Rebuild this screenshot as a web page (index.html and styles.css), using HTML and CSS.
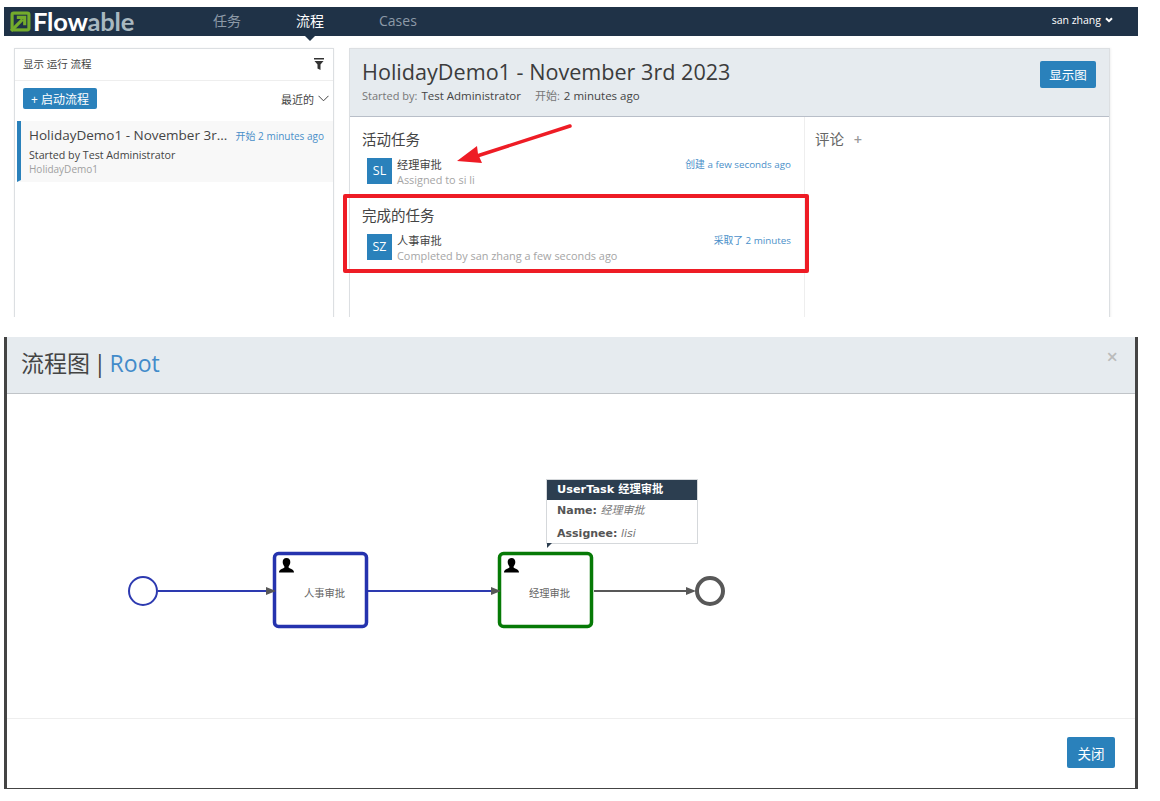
FILE: index.html
```html
<!DOCTYPE html>
<html lang="zh">
<head>
<meta charset="utf-8">
<title>Flowable</title>
<link rel="stylesheet" href="styles.css">
</head>
<body>
<div class="shot">
  <section class="app">
    <nav class="navbar">
      <div class="logo">
        <svg class="logo-mark" width="21" height="21" viewBox="0 0 20 20"><rect x="0.500" y="0.500" width="19" height="19" rx="3" fill="#73ab2c"/><rect x="3.500" y="3.500" width="13" height="13" fill="#1f3247"/><path d="M1 19 L12 8 M6.500 6 H14 V13.500" fill="none" stroke="#73ab2c" stroke-width="3"/></svg>
        <span class="logo-text">Flow<span class="logo-dim">able</span></span>
      </div>
      <ul class="nav-links">
        <li class="nav-link">任务</li>
        <li class="nav-link nav-active">流程</li>
        <li class="nav-link">Cases</li>
      </ul>
      <div class="user">san zhang <svg width="8" height="6" viewBox="0 0 8 6"><path d="M1 1.200 L4 4.200 L7 1.200" fill="none" stroke="#fff" stroke-width="2"/></svg></div>
    </nav>
    <div class="main">
      <aside class="list-panel">
        <div class="list-head">
          <span>显示 运行 流程</span>
          <svg width="10" height="12" viewBox="0 0 10 12"><path d="M0 0H10V1.500H0Z M0.500 3H9.500L6.500 6.500V12L3.500 10.500V6.500Z" fill="#333"/></svg>
        </div>
        <div class="list-tools">
          <button class="btn btn-start">+ 启动流程</button>
          <span class="sort">最近的 <svg width="11" height="7" viewBox="0 0 11 7"><path d="M0.500 0.800 L5.500 5.800 L10.500 0.800" fill="none" stroke="#444" stroke-width="1"/></svg></span>
        </div>
        <div class="list-item">
          <div class="item-top">
            <span class="item-title">HolidayDemo1 - November 3r...</span>
            <span class="item-time">开始 2 minutes ago</span>
          </div>
          <div class="item-by">Started by Test Administrator</div>
          <div class="item-def">HolidayDemo1</div>
        </div>
      </aside>
      <div class="detail-panel">
        <header class="detail-head">
          <div>
            <h1 class="detail-title">HolidayDemo1 - November 3rd 2023</h1>
            <p class="detail-meta"><span class="meta-key">Started by:</span> <span class="meta-val">Test Administrator</span> <span class="meta-key meta-gap">开始:</span> <span class="meta-val">2 minutes ago</span></p>
          </div>
          <button class="btn btn-show">显示图</button>
        </header>
        <div class="detail-body">
          <div class="tasks">
            <h2 class="section-title">活动任务</h2>
            <div class="task">
              <div class="avatar">SL</div>
              <div class="task-text"><div class="task-name">经理审批</div><div class="task-sub">Assigned to si li</div></div>
              <div class="task-time">创建 a few seconds ago</div>
            </div>
            <h2 class="section-title section-done">完成的任务</h2>
            <div class="task">
              <div class="avatar">SZ</div>
              <div class="task-text"><div class="task-name">人事审批</div><div class="task-sub">Completed by san zhang a few seconds ago</div></div>
              <div class="task-time">采取了 2 minutes</div>
            </div>
          </div>
          <div class="comments"><h2 class="section-title comment-title">评论 <span class="plus">+</span></h2></div>
        </div>
      </div>
    </div>
    <div class="mark-box"></div>
    <svg class="mark-arrow" width="120" height="50" viewBox="0 0 120 50"><path d="M113 2 L20 32" stroke="#ee1c25" stroke-width="3.500" stroke-linecap="round" fill="none"/><path d="M0 37 L20 22 L21 30 L25 39 Z" fill="#ee1c25"/></svg>
  </section>

  <section class="modal">
    <header class="modal-head">
      <h2 class="modal-title">流程图 | <span class="modal-link">Root</span></h2>
      <span class="modal-x">×</span>
    </header>
    <div class="canvas">
      <svg class="diagram" width="1128" height="324" viewBox="7 394 1128 324">
        <defs>
          <path id="person" d="M7.500 0 C10.200 0 11.400 2 11.300 4.200 C11.200 6.400 10.200 7.600 9.600 8.400 L9.700 9.800 C11 10.800 15 11.200 15 14.400 H0 C0 11.200 4 10.800 5.300 9.800 L5.400 8.400 C4.800 7.600 3.800 6.400 3.700 4.200 C3.600 2 4.800 0 7.500 0 Z"/>
        </defs>
        <circle cx="143" cy="591" r="14" fill="#fff" stroke="#2d3ab0" stroke-width="2"/>
        <path d="M158 591 H272 M368 591 H497" stroke="#2d3ab0" stroke-width="2" fill="none"/>
        <path d="M594 591 H692" stroke="#585858" stroke-width="2" fill="none"/>
        <rect x="274.500" y="553.500" width="92" height="73" rx="4" fill="#fff" stroke="#2533ae" stroke-width="3.500"/>
        <rect x="499.500" y="553.500" width="92" height="73" rx="4" fill="#fff" stroke="#067a06" stroke-width="3.500"/>
        <path d="M266 587 L276 591 L266 595 Z M491 587 L501 591 L491 595 Z M686 587 L696 591 L686 595 Z" fill="#585858"/>
        <circle cx="710" cy="591" r="13" fill="#fff" stroke="#585858" stroke-width="4"/>
        <use href="#person" x="279" y="558"/>
        <use href="#person" x="504" y="558"/>
        <text class="task-label" x="324.500" y="597" text-anchor="middle">人事审批</text>
        <text class="task-label" x="549.500" y="597" text-anchor="middle">经理审批</text>
      </svg>
      <div class="tip">
        <div class="tip-head">UserTask 经理审批</div>
        <div class="tip-row"><b>Name:</b> <i>经理审批</i></div>
        <div class="tip-row"><b>Assignee:</b> <i>lisi</i></div>
        <span class="tip-corner"></span>
      </div>
    </div>
    <footer class="modal-foot"><button class="btn btn-close">关闭</button></footer>
  </section>
</div>
</body>
</html>
```
FILE: styles.css
```css
* { box-sizing: border-box; }
html, body { margin: 0; padding: 0; background: #fff; }
body { font-family: "Open Sans", "Noto Sans CJK SC", sans-serif; color: #333; width: 1160px; height: 801px; overflow: hidden; }
.shot { padding-top: 7px; }
.app { position: relative; margin-left: 4px; width: 1134px; height: 310px; overflow: hidden; }

.navbar { display: flex; align-items: center; height: 29px; background: #1f3247; position: relative; }
.logo { display: flex; align-items: center; gap: 2px; width: 196px; padding-left: 6px; }
.logo-mark { flex: none; }
.logo-text { font-family: "Lato", sans-serif; font-size: 25.500px; line-height: 27px; color: #fff; font-weight: 700; letter-spacing: -.2px; }
.logo-dim { color: #a9b8c0; }
.nav-links { display: flex; list-style: none; margin: 0; padding: 0 0 0 13px; gap: 55px; flex: 1; }
.nav-link { font-size: 14px; color: #8d9aa7; line-height: 27px; position: relative; height: 29px; }
.nav-active { color: #fff; }
.nav-active::after { content: ""; position: absolute; left: 50%; margin-left: -5px; top: 29px; border: 5px solid transparent; border-top-color: #1f3247; border-bottom: 0; }
.user { font-size: 10.500px; color: #fff; padding: 0 25px 3px 0; display: flex; align-items: center; gap: 4px; }

.main { display: flex; align-items: flex-start; gap: 15px; padding: 12px 0 0 10px; }
.list-panel { width: 320px; height: 280px; border: 1px solid #dcdfe2; box-shadow: 0 0 2px rgba(0,0,0,.05); flex: none; }
.list-head { display: flex; justify-content: space-between; align-items: center; height: 32px; padding: 0 9px 2px 8px; font-size: 10.500px; color: #444; border-bottom: 1px solid #eee; }
.list-tools { display: flex; justify-content: space-between; align-items: center; height: 39px; padding: 0 4px 4px 8px; font-size: 11px; }
.btn { border: 0; border-radius: 2px; background: #2a81bb; color: #fff; font-family: inherit; padding: 0; display: block; }
.btn-start { width: 74px; height: 21px; font-size: 12px; }
.sort { display: flex; align-items: center; gap: 4px; color: #444; }
.list-item { margin: 1px 0 0 2px; padding: 6px 9px 0 8px; height: 61px; background: #f8f8f8; border-left: 4px solid #2a81bb; border-bottom: 2px solid #f8f8f8; }
.item-top { display: flex; justify-content: space-between; align-items: baseline; }
.item-title { font-size: 13.500px; line-height: 16px; color: #444; white-space: nowrap; }
.item-time { font-size: 10px; color: #4a8fc9; white-space: nowrap; }
.item-by { font-size: 10.700px; line-height: 14px; margin-top: 5px; color: #444; }
.item-def { font-size: 10px; line-height: 13px; color: #a0a0a0; margin-top: 1px; }

.detail-panel { width: 761px; height: 280px; border: 1px solid #dcdfe2; border-bottom: 0; box-shadow: 1px 0 2px rgba(0,0,0,.06); flex: none; }
.detail-head { display: flex; justify-content: space-between; align-items: flex-start; height: 68px; background: #e6ebef; border-bottom: 1px solid #b8bec8; padding: 10px 13px 0 12px; }
.detail-title { margin: 0; font-size: 21.600px; font-weight: 400; line-height: 25px; color: #3c3c3c; white-space: nowrap; }
.detail-meta { margin: 4px 0 0; font-size: 11.500px; line-height: 16px; color: #444; }
.meta-key { color: #777; font-size: 11px; }
.meta-val { margin-left: 1px; }
.meta-gap { margin-left: 11px; }
.btn-show { width: 56px; height: 27px; font-size: 12.500px; margin-top: 2px; }
.detail-body { display: flex; height: 200px; }
.tasks { width: 455px; border-right: 1px solid #eee; padding: 13px 13px 0 12px; }
.section-title { margin: 0; font-size: 14.500px; font-weight: 400; line-height: 19px; color: #444; }
.section-done { margin: 22px 0 1px; }
.task { display: flex; align-items: flex-start; margin: 9px 0 0 5px; height: 26px; }
.avatar { width: 25px; height: 26px; background: #2a81bb; color: #fff; font-size: 12.500px; line-height: 26px; text-align: center; flex: none; }
.task-text { flex: 1; padding: 0 0 0 5px; }
.task-name { font-size: 11.200px; line-height: 14px; color: #444; }
.task-sub { font-size: 10.900px; line-height: 16px; color: #a5a5a5; white-space: nowrap; }
.task-time { font-size: 9.800px; line-height: 14px; color: #4a8fc9; white-space: nowrap; }
.comments { flex: 1; padding: 13px 0 0 10px; }
.comment-title { color: #666; }
.plus { color: #999; margin-left: 6px; font-weight: 600; }

.mark-box { position: absolute; left: 339px; top: 187px; width: 466px; height: 79px; border: 4px solid #ee1c25; border-radius: 2px; }
.mark-arrow { position: absolute; left: 453px; top: 117px; }

.modal { margin: 20px 0 0 4px; width: 1134px; height: 452px; border-left: 3px solid #444; border-right: 3px solid #444; border-bottom: 1px solid #444; display: flex; flex-direction: column; }
.modal-head { height: 57px; background: #e6ebef; border-bottom: 1px solid #c0c4c8; display: flex; justify-content: space-between; padding: 11px 17px 0 14px; flex: none; }
.modal-title { margin: 0; font-size: 23px; font-weight: 400; line-height: 30px; color: #444; word-spacing: -2.500px; }
.modal-link { color: #428bca; }
.modal-x { font-size: 20px; line-height: 18px; color: #bbb; font-weight: 600; }
.canvas { position: relative; height: 325px; border-bottom: 1px solid #eee; flex: none; }
.diagram { display: block; }
.task-label { font-family: "Noto Sans CJK SC", sans-serif; font-size: 10.300px; fill: #666; }
.tip { position: absolute; left: 539px; top: 85px; width: 152px; height: 65px; background: #fff; border: 1px solid #d5d8db; font-family: "DejaVu Sans", "Noto Sans CJK SC", sans-serif; font-size: 11px; color: #555; }
.tip-head { height: 20px; background: #2c3e50; color: #fff; font-weight: 700; font-size: 11.300px; line-height: 19px; padding-left: 10px; }
.tip-row { line-height: 22px; padding-left: 10px; }
.tip-row + .tip-row { margin-top: 1px; }
.tip-row i { color: #777; }
.tip-corner { position: absolute; left: 0; top: 63px; border-top: 5px solid #2c3e50; border-right: 5px solid transparent; }
.modal-foot { flex: 1; display: flex; justify-content: flex-end; align-items: flex-start; padding: 18px 20px 0 0; }
.btn-close { width: 48px; height: 31px; font-size: 13.500px; }
```
